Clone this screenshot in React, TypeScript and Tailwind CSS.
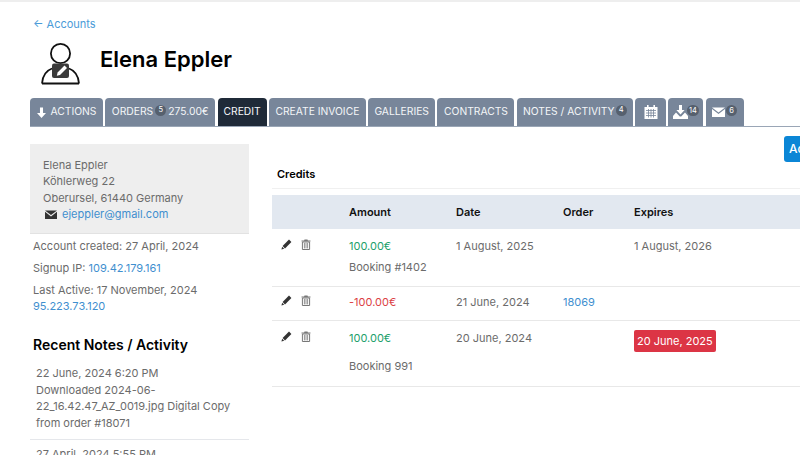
import React from "react";

const Badge = ({ n, className = "" }: { n: string; className?: string }) => (
  <span className={`inline-flex items-center justify-center h-[11px] min-w-[11px] rounded-full bg-[#56606e] text-[7.5px] leading-none text-white px-[2px] ${className}`}>{n}</span>
);

const Tab = ({ children, active, w }: { children: React.ReactNode; active?: boolean; w: string }) => (
  <div className={`${w} h-[28px] flex items-center justify-center whitespace-nowrap rounded-t-[4px] text-[#f4f6f8] text-[10.3px] ${active ? "bg-[#1f2a38]" : "bg-[#78869a]"}`}>
    {children}
  </div>
);

const Pencil = () => (
  <svg width="11" height="11" viewBox="0 0 11 11" className="shrink-0">
    <path d="M8 .6 10.4 3 4 9.4 1.6 7z" fill="#333" />
    <path d="M1.2 7.8 3.2 9.8.4 10.6z" fill="#333" />
  </svg>
);

const Trash = () => (
  <svg width="10" height="11" viewBox="0 0 10 11" className="shrink-0">
    <path d="M3.5.5h3l.4 1H9.5v1H.5v-1h2.6z" fill="#777" />
    <path d="M1.4 3h7.2v7.5H1.4z" fill="none" stroke="#777" />
    <path d="M3.4 4v5.4M5 4v5.4M6.6 4v5.4" stroke="#777" strokeWidth=".8" />
  </svg>
);

const Mail = ({ w = 12, h = 9, c = "#333" }: { w?: number; h?: number; c?: string }) => (
  <svg width={w} height={h} viewBox="0 0 12 9" className="shrink-0">
    <path d="M0 .4h12L6 5z" fill={c} />
    <path d="M0 1.8 6 6.4l6-4.6V9H0z" fill={c} />
  </svg>
);

const Row = ({ h, pad = "pt-[9px]", amount, color, note, noteClass = "mt-[5px]", date, order, expires }: { h: string; pad?: string; amount: string; color: string; note?: string; noteClass?: string; date: string; order?: string; expires?: React.ReactNode }) => (
  <div className={`${h} grid grid-cols-[77px_107px_107px_71px_1fr] border-b border-[#e8e8e8] text-[11px] leading-[16px] text-[#6b6b6b]`}>
    <div className={`${pad} pl-[9px] flex items-start gap-[9px]`}>
      <span className="mt-[1px]"><Pencil /></span>
      <span className="mt-[1px]"><Trash /></span>
    </div>
    <div className={pad}>
      <div className={color}>{amount}</div>
      {note && <div className={noteClass}>{note}</div>}
    </div>
    <div className={pad}>{date}</div>
    <div className={`${pad} text-[#3f8fcf]`}>{order}</div>
    <div className={pad}>{expires}</div>
  </div>
);

export default function App() {
  return (
    <div className="w-[800px] h-[455px] overflow-hidden border-t-2 border-[#eeeeee] bg-white font-['Inter',sans-serif] text-[#6b6b6b]">
      <div className="pl-[33px] pt-[14px] text-[11px] leading-[16px] text-[#4a9bd8]">← Accounts</div>

      <div className="pl-[40px] pt-[10px] h-[60px] flex items-start">
        <svg width="41" height="44" viewBox="0 0 41 44" className="shrink-0">
          <circle cx="20.5" cy="11.5" r="9.6" fill="none" stroke="#111" strokeWidth="1.8" />
          <path d="M2 41.5C2.5 34 6.5 28.5 12 26.5M29 26.5C34.5 28.5 38.5 34 39 41.5M2 41.5H39" fill="none" stroke="#111" strokeWidth="1.8" />
          <rect x="12" y="21.5" width="17" height="14.5" rx="2" fill="#3a3a3a" />
          <path d="M24.5 23.5 27 26 20 33l-3.2.8.8-3.2z" fill="#fff" />
        </svg>
        <h1 className="ml-[19px] mt-[1px] text-[22px] leading-[32px] font-semibold text-black whitespace-nowrap">Elena Eppler</h1>
      </div>

      <div className="mt-[6px] ml-[30px] flex gap-[2.3px] border-b border-[#9aa6b6] w-[770px]">
        <Tab w="w-[73px]">
          <svg width="9" height="13" viewBox="0 0 10 13" className="mr-[5px]"><path d="M3.3 1h3.4v6H10l-5 5.5L0 7h3.3z" fill="#fff" /></svg>
          ACTIONS
        </Tab>
        <Tab w="w-[110px]">ORDERS<Badge n="5" className="mx-[2px] -mt-[4px]" /> 275.00€</Tab>
        <Tab w="w-[49px]" active>CREDIT</Tab>
        <Tab w="w-[97px]">CREATE INVOICE</Tab>
        <Tab w="w-[67px]">GALLERIES</Tab>
        <Tab w="w-[77px]">CONTRACTS</Tab>
        <Tab w="w-[116px]">NOTES / ACTIVITY<Badge n="4" className="ml-[1px] -mt-[4px]" /></Tab>
        <Tab w="w-[31px]">
          <svg width="14" height="14" viewBox="0 0 14 14">
            <path d="M3 0h1.6v2H9.4V0H11v2h2.5v12H.5V2H3z" fill="#fff" />
            <path d="M2 5.5h10M2 8h10M2 10.5h10M4.5 4v8.5M7 4v8.5M9.5 4v8.5" stroke="#78869a" strokeWidth=".8" />
          </svg>
        </Tab>
        <Tab w="w-[35px]">
          <svg width="15" height="14" viewBox="0 0 15 14" className="-mt-[1px]">
            <path d="M6 0h3v5h2.6L7.5 9.5 3.4 5H6z" fill="#fff" />
            <path d="M3 7.5 6.8 11.5h1.4L12 7.5l3 3.5v3H0v-3z" fill="#fff" />
          </svg>
          <Badge n="14" className="-ml-[1px] -mt-[3px]" />
        </Tab>
        <Tab w="w-[38px]">
          <Mail w={13} h={10} c="#fff" />
          <Badge n="6" className="ml-[1px] -mt-[3px]" />
        </Tab>
      </div>

      <div className="flex pl-[30px]">
        <div className="w-[219px] shrink-0 pt-[17px]">
          <div className="h-[90px] bg-[#eeeeee] border-b border-[#e2e2e2] pl-[13px] pt-[13px] text-[11px] leading-[16.3px] text-[#6b6b6b]">
            <div>Elena Eppler</div>
            <div>Köhlerweg 22</div>
            <div>Oberursel, 61440 Germany</div>
            <div className="flex items-center pl-[2px]">
              <Mail />
              <span className="ml-[5px] text-[#3f8fcf]">ejeppler@gmail.com</span>
            </div>
          </div>
          <div className="pl-[3px] pt-[4px] text-[11px] leading-[16px]">
            <div>Account created: 27 April, 2024</div>
            <div className="mt-[6px]">Signup IP: <span className="text-[#3f8fcf]">109.42.179.161</span></div>
            <div className="mt-[6px]">Last Active: 17 November, 2024</div>
            <div className="text-[#3f8fcf]">95.223.73.120</div>
          </div>
          <h2 className="pl-[3px] mt-[21px] text-[14px] leading-[20px] font-semibold text-black">Recent Notes / Activity</h2>
          <div className="pl-[6px] mt-[10px] pb-[8px] text-[11px] leading-[16.5px] text-[#6b6b6b] border-b border-[#e5e7eb] -mb-px">
            <div>22 June, 2024 6:20 PM</div>
            <div>Downloaded 2024-06-</div>
            <div>22_16.42.47_AZ_0019.jpg Digital Copy</div>
            <div>from order #18071</div>
          </div>
          <div className="pl-[6px] pt-[7px] text-[11px] leading-[16.5px]">27 April, 2024 5:55 PM</div>
        </div>

        <div className="ml-[23px] w-[560px] shrink-0">
          <div className="h-[26px] mt-[9px] ml-[512px] w-[48px] bg-[#0b86d6] rounded-[3px] text-white text-[12px] font-medium flex items-center pl-[5px]">Add</div>
          <div className="h-[27px] pl-[5px] pt-[4px] text-[11px] leading-[16px] font-semibold text-black border-b border-[#f0f0f0]">Credits</div>
          <div className="mt-[6px] h-[34px] bg-[#e2e8f0] grid grid-cols-[77px_107px_107px_71px_1fr] items-center text-[11px] font-semibold text-[#111]">
            <div />
            <div>Amount</div>
            <div>Date</div>
            <div>Order</div>
            <div>Expires</div>
          </div>
          <Row h="h-[58px]" amount="100.00€" color="text-[#22a06b]" note="Booking #1402" date="1 August, 2025" expires="1 August, 2026" />
          <Row h="h-[34px]" pad="pt-[7px]" amount="-100.00€" color="text-[#dc3f45]" date="21 June, 2024" order="18069" />
          <Row
            h="h-[66px]"
            pad="pt-[9px]"
            amount="100.00€"
            color="text-[#22a06b]"
            note="Booking 991"
            noteClass="mt-[12px]"
            date="20 June, 2024"
            expires={<span className="inline-block bg-[#dc3545] text-white rounded-[2px] px-[3px] h-[22px] leading-[22px]">20 June, 2025</span>}
          />
        </div>
      </div>
    </div>
  );
}
